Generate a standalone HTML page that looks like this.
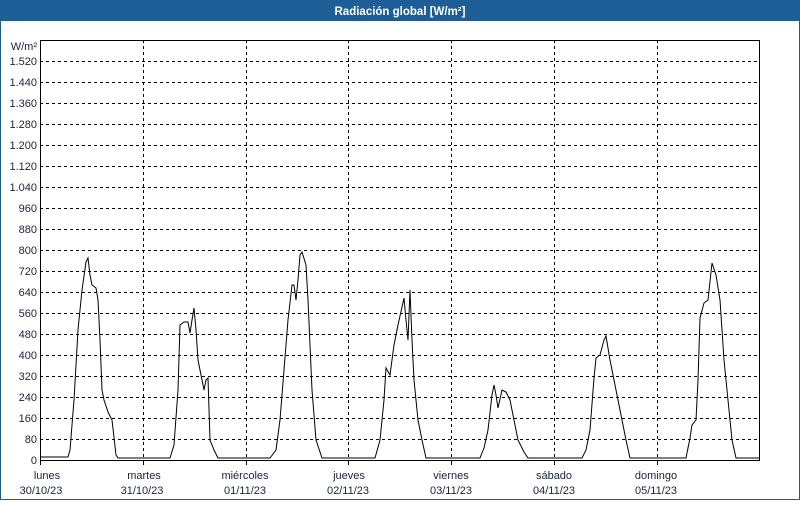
<!DOCTYPE html>
<html><head><meta charset="utf-8"><style>
body{margin:0;width:800px;height:500px;overflow:hidden;background:#fff;font-family:"Liberation Sans",sans-serif}
</style></head><body>
<svg width="800" height="500" xmlns="http://www.w3.org/2000/svg" font-family="Liberation Sans, sans-serif" font-size="11" fill="#1a2440">
<rect x="0.5" y="0.5" width="799" height="499" fill="#fff" stroke="#1d5e96"/>
<rect x="0" y="0" width="800" height="21" fill="#1d5e96"/>
<text x="400" y="15" text-anchor="middle" fill="#fff" font-weight="bold" font-size="11.5">Radiación global [W/m²]</text>
<g stroke="#000" stroke-dasharray="3,3" stroke-width="1">
<path d="M40 61.5H760M40 82.5H760M40 103.5H760M40 124.5H760M40 145.5H760M40 166.5H760M40 187.5H760M40 208.5H760M40 229.5H760M40 250.5H760M40 271.5H760M40 292.5H760M40 313.5H760M40 334.5H760M40 355.5H760M40 376.5H760M40 397.5H760M40 418.5H760M40 439.5H760"/>
<path d="M143.5 40V460M246.5 40V460M348.5 40V460M451.5 40V460M554.5 40V460M657.5 40V460"/>
</g>
<rect x="40.5" y="40.5" width="719" height="420" fill="none" stroke="#000"/>
<path d="M40.5 460v5M143.5 460v5M246.5 460v5M348.5 460v5M451.5 460v5M554.5 460v5M657.5 460v5" stroke="#000"/>
<g text-anchor="end">
<text x="37" y="50">W/m²</text>
<text x="37" y="65">1.520</text><text x="37" y="86">1.440</text><text x="37" y="107">1.360</text><text x="37" y="128">1.280</text><text x="37" y="149">1.200</text><text x="37" y="170">1.120</text><text x="37" y="191">1.040</text><text x="37" y="212">960</text><text x="37" y="233">880</text><text x="37" y="254">800</text><text x="37" y="275">720</text><text x="37" y="296">640</text><text x="37" y="317">560</text><text x="37" y="338">480</text><text x="37" y="359">400</text><text x="37" y="380">320</text><text x="37" y="401">240</text><text x="37" y="422">160</text><text x="37" y="443">80</text><text x="37" y="464">0</text>
</g>
<g text-anchor="middle">
<text x="47" y="479">lunes</text><text x="41" y="494">30/10/23</text>
<text x="144" y="479">martes</text><text x="142" y="494">31/10/23</text>
<text x="245" y="479">miércoles</text><text x="245" y="494">01/11/23</text>
<text x="349" y="479">jueves</text><text x="348" y="494">02/11/23</text>
<text x="451" y="479">viernes</text><text x="451" y="494">03/11/23</text>
<text x="554" y="479">sábado</text><text x="554" y="494">04/11/23</text>
<text x="656" y="479">domingo</text><text x="656" y="494">05/11/23</text>
</g>
<polyline fill="none" stroke="#000" stroke-width="1" points="40,457 68,457 70,450 74,400 78,330 82,290 86,262 88,258 90,275 92,285 96,288 98,300 100,340 102,390 104,400 108,412 112,420 116,455 118,458 170,458 174,445 178,390 180,325 184,322 188,322 190,333 192,320 194,308 196,330 198,360 202,380 204,390 206,380 208,378 210,440 214,450 218,458 270,458 276,450 280,420 284,370 288,320 292,285 294,285 296,300 298,280 300,255 302,252 306,265 308,300 312,390 316,440 322,458 375,458 380,440 384,400 386,368 390,375 394,345 398,325 404,298 406,320 408,340 410,290 412,340 414,380 418,420 422,440 426,458 480,458 484,448 488,430 492,395 494,385 496,395 498,408 502,390 506,392 510,400 514,420 518,440 524,452 528,458 582,458 586,450 590,430 594,378 596,358 600,355 604,340 606,336 610,360 614,380 618,400 622,420 626,440 630,458 686,458 690,438 692,425 696,420 698,380 700,318 704,303 708,300 712,263 716,275 720,300 724,360 728,400 732,440 736,458 760,458"/>
</svg>
</body></html>
